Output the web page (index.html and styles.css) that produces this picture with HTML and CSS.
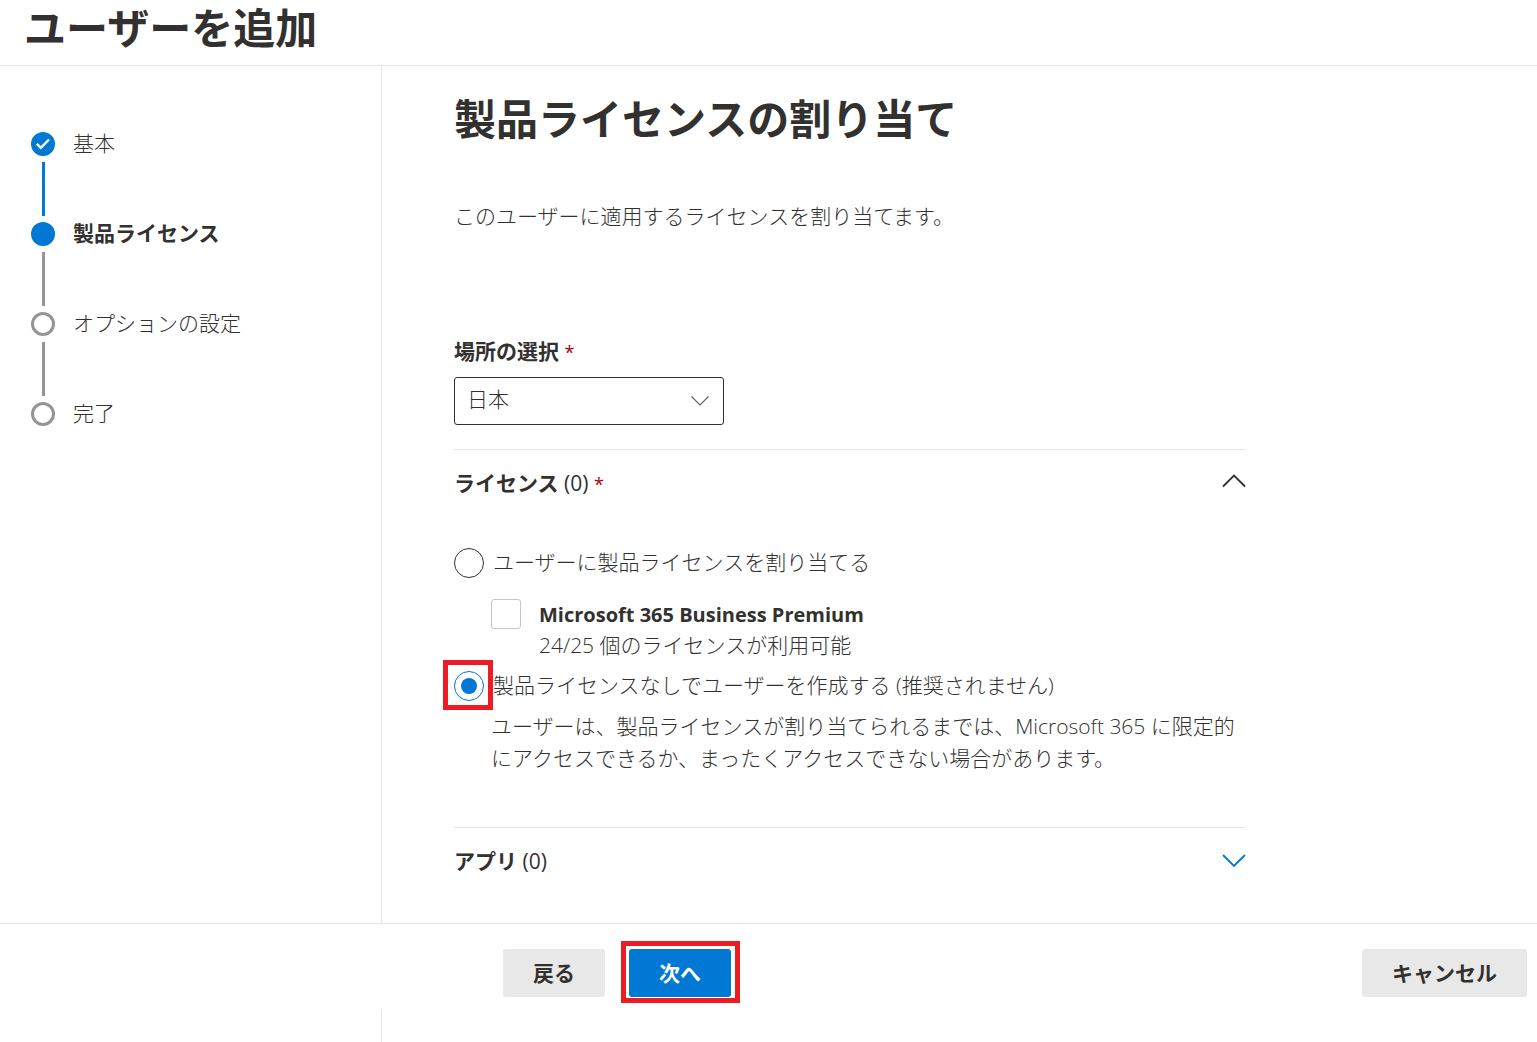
FILE: index.html
```html
<!DOCTYPE html>
<html lang="ja">
<head>
    <meta charset="UTF-8">
    <meta name="viewport" content="width=device-width, initial-scale=1.0">
    <title>ユーザーを追加</title>
    <link rel="stylesheet" href="styles.css">
</head>
<body>
    <header class="page-header">
        <h1>ユーザーを追加</h1>
    </header>

    <div class="wizard">
        <nav class="sidebar">
            <ol class="steps">
                <li class="step done">
                    <span class="marker">
                        <span class="dot">
                            <svg width="24" height="24" viewBox="0 0 24 24"><path d="M5.8 11.8l4 4 8.2-8.3" fill="none" stroke="#fff" stroke-width="2.4"/></svg>
                        </span>
                    </span>
                    <span class="step-label">基本</span>
                </li>
                <li class="step current">
                    <span class="marker"><span class="dot"></span></span>
                    <span class="step-label">製品ライセンス</span>
                </li>
                <li class="step">
                    <span class="marker"><span class="dot"></span></span>
                    <span class="step-label">オプションの設定</span>
                </li>
                <li class="step">
                    <span class="marker"><span class="dot"></span></span>
                    <span class="step-label">完了</span>
                </li>
            </ol>
        </nav>

        <main class="content">
            <form id="license-form" class="license-form">
                <h2>製品ライセンスの割り当て</h2>
                <p class="intro">このユーザーに適用するライセンスを割り当てます。</p>

                <label class="field-label" for="location">場所の選択 <span class="required">*</span></label>
                <div class="select-box">
                    <select id="location" name="location">
                        <option>日本</option>
                    </select>
                    <svg class="select-arrow" width="20" height="12" viewBox="0 0 20 12"><path d="M1.5 1.5l8.5 8.5 8.5-8.5" fill="none" stroke="#605e5c" stroke-width="1.1"/></svg>
                </div>

                <section class="panel">
                    <button type="button" class="panel-header" aria-expanded="true">
                        <span><b>ライセンス</b> (0) <span class="required">*</span></span>
                        <svg width="24" height="18" viewBox="0 0 24 18"><path d="M1 12.5l11-11 11 11" fill="none" stroke="#323130" stroke-width="1.8"/></svg>
                    </button>
                    <div class="panel-body">
                        <div class="option">
                            <input type="radio" name="license" id="assign">
                            <label for="assign">ユーザーに製品ライセンスを割り当てる</label>
                        </div>
                        <div class="product">
                            <input type="checkbox" id="business-premium">
                            <label for="business-premium">
                                <b>Microsoft 365 Business Premium</b>
                                <span>24/25 個のライセンスが利用可能</span>
                            </label>
                        </div>
                        <div class="option">
                            <span class="highlight highlight-radio"><input type="radio" name="license" id="no-license" checked></span>
                            <label for="no-license">製品ライセンスなしでユーザーを作成する (推奨されません)</label>
                        </div>
                        <p class="note">ユーザーは、製品ライセンスが割り当てられるまでは、Microsoft 365 に限定的にアクセスできるか、まったくアクセスできない場合があります。</p>
                    </div>
                </section>

                <section class="panel">
                    <button type="button" class="panel-header" aria-expanded="false">
                        <span><b>アプリ</b> (0)</span>
                        <svg width="24" height="14" viewBox="0 0 24 14"><path d="M1 1l11 11 11-11" fill="none" stroke="#0078d4" stroke-width="1.8"/></svg>
                    </button>
                </section>
            </form>
        </main>
    </div>

    <footer class="actions">
        <button type="button" class="btn">戻る</button>
        <span class="highlight highlight-btn"><button type="submit" form="license-form" class="btn primary">次へ</button></span>
        <button type="button" class="btn cancel">キャンセル</button>
    </footer>
</body>
</html>
```

FILE: styles.css
```css
* {
    box-sizing: border-box;
}
body {
    margin: 0;
    min-height: 100vh;
    display: flex;
    flex-direction: column;
    font-family: "Open Sans", "Noto Sans CJK JP", sans-serif;
    font-size: 21px;
    line-height: 30px;
    color: #323130;
    background: #fff;
}
h1, h2 {
    margin: 0;
    font-size: 42px;
    line-height: 56px;
    font-weight: 700;
}
button, select {
    font: inherit;
    color: inherit;
}
b {
    font-weight: 700;
}
.page-header {
    padding: 0 24px 9px;
    border-bottom: 1px solid #e6e6e6;
}
.wizard {
    flex: 1;
    display: flex;
}

/* steps */
.sidebar {
    width: 382px;
    flex-shrink: 0;
    padding: 66px 31px 0;
    border-right: 1px solid #e6e6e6;
}
.steps {
    list-style: none;
    margin: 0;
    padding: 0;
}
.step {
    display: flex;
    gap: 18px;
    height: 90px;
}
.marker {
    width: 24px;
}
.dot {
    display: block;
    height: 24px;
    border: 3px solid #979593;
    border-radius: 50%;
}
.dot svg {
    display: block;
}
.step.done .dot, .step.current .dot {
    border: none;
    background: #0078d4;
}
.step:not(:last-child) .marker::after {
    content: "";
    display: block;
    width: 3px;
    height: 54px;
    margin: 6px 0 0 11px;
    background: #979593;
}
.step.done .marker::after {
    background: #0078d4 !important;
}
.step-label {
    line-height: 22px;
    font-weight: 300;
}
.step.current .step-label {
    font-weight: 700;
}

/* form */
.content {
    flex: 1;
    padding: 25px 72px 148px;
}
.license-form {
    max-width: 792px;
}
.intro {
    margin: 54px 0 105px;
    font-weight: 300;
}
.field-label {
    display: block;
    margin-bottom: 11px;
    font-weight: 700;
}
.required {
    color: #a80000;
    font-size: 18px;
    line-height: 18px;
    font-weight: 400;
}
.select-box {
    position: relative;
    width: 270px;
    margin-bottom: 24px;
}
.select-box select {
    display: block;
    width: 100%;
    height: 48px;
    padding: 0 40px 4px 12px;
    border: 1px solid #323130;
    border-radius: 3px;
    background: #fff;
    font-weight: 300;
    appearance: none;
}
.select-arrow {
    position: absolute;
    right: 14px;
    top: 18px;
    pointer-events: none;
}
.panel {
    border-top: 1px solid #e6e6e6;
}
.panel-header {
    display: flex;
    justify-content: space-between;
    align-items: center;
    width: 100%;
    height: 66px;
    padding: 0;
    border: none;
    background: none;
    cursor: pointer;
}
.panel-body {
    padding: 32px 0 53px;
    font-weight: 300;
}
.option {
    display: flex;
    gap: 9px;
}
.option label {
    line-height: 28px;
}
.product {
    display: flex;
    gap: 18px;
    margin: 21px 0 12px;
    padding-left: 37px;
}
.product b {
    display: block;
    font-size: 20px;
    line-height: 32px;
}
.product span {
    display: block;
    line-height: 28px;
    color: #323130;
}
.note {
    margin: 9px 0 0;
    padding-left: 37px;
    line-height: 32px;
}
input[type="radio"], input[type="checkbox"] {
    display: block;
    flex-shrink: 0;
    width: 30px;
    height: 30px;
    margin: 0;
    border: 1px solid #323130;
    background: #fff;
    appearance: none;
}
input[type="radio"] {
    border-radius: 50%;
}
input[type="radio"]:checked {
    padding: 6px;
    border-color: #0078d4;
    background: #0078d4 content-box;
}
input[type="checkbox"] {
    border-color: #c8c6c4;
    border-radius: 3px;
}

/* red frames */
.highlight {
    position: relative;
}
.highlight::after {
    content: "";
    position: absolute;
    border: 5px solid #ed1c24;
    pointer-events: none;
}
.highlight-radio::after {
    inset: -11px -9px -9px -11px;
}
.highlight-btn::after {
    inset: -8px -9px -6px -8px;
}

/* bottom bar, stays over the content */
.actions {
    position: fixed;
    left: 0;
    right: 0;
    bottom: 33px;
    display: flex;
    gap: 24px;
    padding: 25px 10px 12px 503px;
    border-top: 1px solid #e6e6e6;
    background: #fff;
}
.btn {
    display: block;
    height: 48px;
    padding: 0 30px;
    border: none;
    border-radius: 3px;
    background: #e8e8e8;
    font-weight: 700;
    cursor: pointer;
}
.btn.primary {
    background: #0078d4;
    color: #fff;
}
.btn.cancel {
    margin-left: auto;
}
```
